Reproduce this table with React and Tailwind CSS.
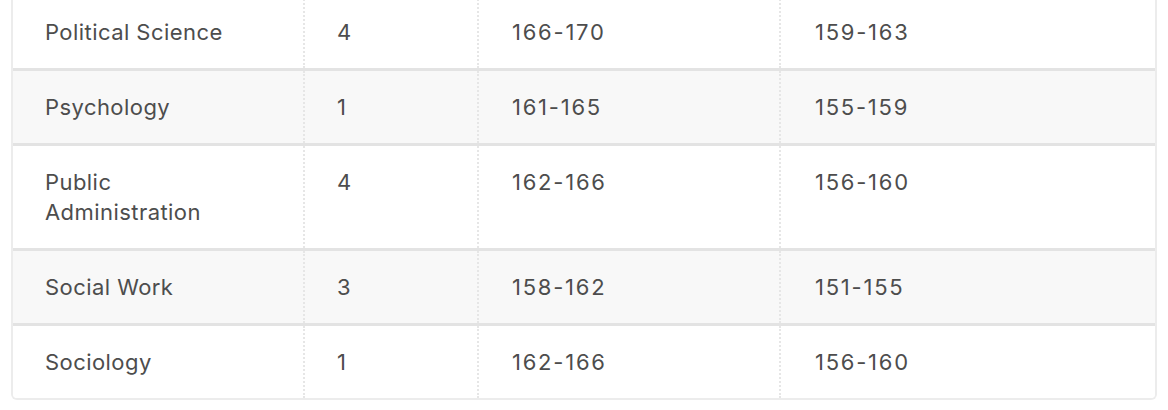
const rows = [
  { program: 'Political Science', count: '4', a: '166-170', b: '159-163' },
  { program: 'Psychology', count: '1', a: '161-165', b: '155-159' },
  { program: 'Public Administration', count: '4', a: '162-166', b: '156-160' },
  { program: 'Social Work', count: '3', a: '158-162', b: '151-155' },
  { program: 'Sociology', count: '1', a: '162-166', b: '156-160' },
];

const App = () => {
  return (
    <div className="w-[1168px] h-[410px] bg-white overflow-hidden" style={{ fontFamily: 'Inter, "Noto Sans", sans-serif' }}>
      {/* Table continues from above, so the first row is partly cut */}
      <div className="ml-[11px] w-[1146px] mt-[-4px] border-x-2 border-b-2 border-[#ececec] rounded-b-[6px] overflow-hidden">
        {rows.map((row, i) => (
          <div
            key={row.program}
            className={`flex text-[22px] leading-[30px] text-[#4d4d4d] ${i % 2 === 1 ? 'bg-[#f8f8f8]' : 'bg-white'} ${i < rows.length - 1 ? 'border-b-[3px] border-[#e3e3e3]' : ''}`}
          >
            <div className="w-[290px] shrink-0 pl-[32px] pr-[60px] py-[21px] tracking-[0.02em]">{row.program}</div>
            <div className="w-[174px] shrink-0 border-l-2 border-dotted border-[#e6e6e6] pl-[32px] py-[21px]">{row.count}</div>
            <div className="w-[302px] shrink-0 border-l-2 border-dotted border-[#e6e6e6] pl-[33px] py-[21px] tracking-[0.08em]">{row.a}</div>
            <div className="flex-1 border-l-2 border-dotted border-[#e6e6e6] pl-[34px] py-[21px] tracking-[0.08em]">{row.b}</div>
          </div>
        ))}
      </div>
    </div>
  );
};

export default App;
